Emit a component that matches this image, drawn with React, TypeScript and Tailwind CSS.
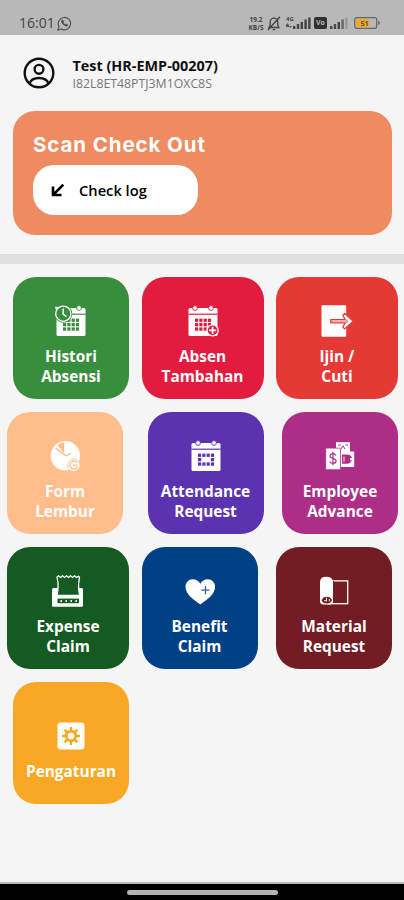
import type { ReactNode } from "react";

// Icons are drawn in white, the cut-outs take the tile colour via currentColor
function Icon({ children }: { children: ReactNode }) {
  return (
    <svg width="32" height="32" viewBox="0 0 32 32" fill="#fff">
      {children}
    </svg>
  );
}

function Calendar({ skip = [] }: { skip?: number[] }) {
  return (
    <>
      <rect x="1.5" y="3" width="29" height="28" rx="1.5" />
      <path d="M1.5 9.2h29" stroke="currentColor" strokeWidth="1.2" />
      <circle cx="8" cy="3" r="2.4" stroke="currentColor" strokeWidth="0.9" />
      <circle cx="24" cy="3" r="2.4" stroke="currentColor" strokeWidth="0.9" />
      {[0, 1, 2, 3, 4, 5, 6, 7, 8, 9, 10, 11].map((i) =>
        skip.includes(i) ? null : (
          <rect
            key={i}
            x={8 + (i % 4) * 4.3}
            y={13.6 + Math.floor(i / 4) * 4.4}
            width="3.2"
            height="3.3"
            fill="currentColor"
          />
        ),
      )}
    </>
  );
}

function HistoryIcon() {
  return (
    <Icon>
      <Calendar skip={[0]} />
      <circle cx="8.3" cy="8.7" r="9" fill="currentColor" />
      <circle cx="8.3" cy="8.7" r="7.6" fill="none" stroke="#fff" strokeWidth="1.3" />
      <path d="M8.2 3.4v5.8l3.2 2.4" fill="none" stroke="#fff" strokeWidth="1.5" />
      <path d="M0 1.8l4.6.2-3.4 3.8z" />
    </Icon>
  );
}

function AddCalendarIcon() {
  return (
    <Icon>
      <Calendar skip={[11]} />
      <circle cx="25.6" cy="25.4" r="6.2" />
      <circle cx="25.6" cy="25.4" r="4.9" fill="currentColor" />
      <path d="M25.6 21.8v7.2M22 25.4h7.2" stroke="#fff" strokeWidth="1.7" />
    </Icon>
  );
}

function LeaveIcon() {
  return (
    <Icon>
      <rect x="0.5" y="0.2" width="24.7" height="31.6" rx="1" />
      <path
        d="M9.8 14.6h14.4l-2.4-4.2 1.8-2 8.6 7.8-8.6 7.8-1.8-2 2.4-4.2H9.8z"
        stroke="currentColor"
        strokeWidth="1.2"
      />
      <path d="M10 16.2h16" stroke="currentColor" strokeWidth="0.6" />
      <path d="M26 14.6v3.2" stroke="currentColor" strokeWidth="1" />
    </Icon>
  );
}

function OvertimeIcon() {
  return (
    <Icon>
      <circle cx="16.3" cy="15.8" r="14.7" />
      <path d="M8.5 5.2L13 2.4l2.2.2v11z" fill="currentColor" />
      <path d="M6.5 8.2l10.5 7.6 4.8-2.4" fill="none" stroke="currentColor" strokeWidth="1.3" />
      <circle cx="24.8" cy="25.2" r="6.2" stroke="currentColor" strokeWidth="0.8" />
      <path
        d="M28.3 23a4 4 0 1 0 .3 3.4M23.5 25.2h5.3"
        fill="none"
        stroke="currentColor"
        strokeWidth="1.3"
      />
    </Icon>
  );
}

function AttendanceIcon() {
  return (
    <Icon>
      <Calendar skip={[5, 6]} />
      <rect x="13.3" y="18" width="5" height="3.8" />
    </Icon>
  );
}

function AdvanceIcon() {
  return (
    <Icon>
      <rect x="12" y="2.2" width="14" height="12" />
      <path d="M14 5h2.5M21.5 5H24M17 9l2-3.2L21 9" fill="none" stroke="currentColor" />
      <rect x="16" y="11.5" width="14.2" height="15.6" rx="1" />
      <path d="M18 14.5h5.5a4.6 4.6 0 0 1 0 9.2H18z" fill="currentColor" />
      <path d="M26 18h4v2.4h-4z" />
      <path d="M20 16.5v5.4" stroke="#fff" strokeWidth="0.9" />
      <rect x="1.7" y="8.1" width="14.8" height="21.6" rx="0.8" stroke="currentColor" strokeWidth="0.8" />
      <path
        d="M12 15.5c-.6-1.3-1.8-1.8-3-1.8-1.7 0-2.9.9-2.9 2.3 0 3.3 6 1.8 6 5 0 1.5-1.3 2.4-3.1 2.4-1.6 0-2.7-.7-3.2-2M9 11.8v13.4"
        fill="none"
        stroke="currentColor"
        strokeWidth="1.2"
      />
    </Icon>
  );
}

function ExpenseIcon() {
  return (
    <Icon>
      <path d="M0 14.5Q0 13 1.5 13h28q1.5 0 1.5 1.5v16q0 1.2-1.2 1.2H1.2Q0 31.7 0 30.5z" />
      <path
        d="M5 2l1.5-1.2 2 1.6 2-1.6 2 1.6 2-1.6 2 1.6 2-1.6 2 1.6 2-1.6 2 1.6 2-1.2 1 1-.9 6.8V14l1 6.5H5L6 14V8z"
        fill="currentColor"
        stroke="#fff"
        strokeWidth="1.3"
      />
      <rect x="5.5" y="23.6" width="21.5" height="4.6" fill="currentColor" />
      <path d="M8.5 26H25" stroke="#fff" strokeWidth="1.8" strokeDasharray="1.5 3.5" />
    </Icon>
  );
}

function BenefitIcon() {
  return (
    <Icon>
      <path d="M16.3 29.5C9 24.5 1.5 19 1.5 11.8c0-4.3 3.2-7.5 7.3-7.5 3.2 0 5.9 1.6 7.5 4.4 1.6-2.8 4.3-4.4 7.5-4.4 4.1 0 7.3 3.2 7.3 7.5 0 7.2-7.5 12.7-14.8 17.7z" />
      <path d="M21.5 11v8.2M17.4 15.1h8.2" stroke="currentColor" strokeWidth="1.3" opacity="0.8" />
    </Icon>
  );
}

function MaterialIcon() {
  return (
    <Icon>
      <rect x="9" y="5.9" width="20.7" height="22.8" fill="none" stroke="#fff" strokeWidth="1.3" />
      <path d="M2 7q0-5.300 6.2-5.300T15 6.500V27q0 2.400-2.500 2.400H5Q2 29.400 2 26z" />
      <path
        d="M3.500 25.200Q5.500 21.500 9 21.800q4 .4 5 3.400-1.600 3.300-5.200 3.200-3.800 0-5.300-3.200z"
        fill="currentColor"
      />
      <path d="M8.5 22.5v3.8M6 25.7h2.5M11.3 24v2.4" stroke="#fff" strokeWidth="0.9" />
      <path d="M15.5 6v22" stroke="currentColor" />
    </Icon>
  );
}

function SettingsIcon() {
  return (
    <Icon>
      <rect x="2.5" y="2.5" width="27" height="27" rx="3" />
      <path
        d="M16 7v18M7 16h18M9.6 9.6l12.8 12.8M22.4 9.6L9.6 22.4"
        stroke="currentColor"
        strokeWidth="2.3"
      />
      <circle cx="16" cy="16" r="6.2" fill="currentColor" />
      <circle cx="16" cy="16" r="3.3" />
    </Icon>
  );
}

const menus = [
  { label: ["Histori", "Absensi"], icon: <HistoryIcon />, style: "w-[116px] justify-self-end bg-[#388e3c] text-[#388e3c]" },
  { label: ["Absen", "Tambahan"], icon: <AddCalendarIcon />, style: "w-full bg-[#e31b3e] text-[#e31b3e]" },
  { label: ["Ijin /", "Cuti"], icon: <LeaveIcon />, style: "w-full bg-[#e53935] text-[#e53935]" },
  { label: ["Form", "Lembur"], icon: <OvertimeIcon />, style: "w-[116px] bg-[#ffbd8c] text-[#ffbd8c]" },
  { label: ["Attendance", "Request"], icon: <AttendanceIcon />, style: "w-[116px] justify-self-end bg-[#5b33b1] text-[#5b33b1]" },
  { label: ["Employee", "Advance"], icon: <AdvanceIcon />, style: "w-[116px] justify-self-end bg-[#ae2d86] text-[#ae2d86]" },
  { label: ["Expense", "Claim"], icon: <ExpenseIcon />, style: "w-full bg-[#155a20] text-[#155a20]" },
  { label: ["Benefit", "Claim"], icon: <BenefitIcon />, style: "w-[116px] bg-[#004085] text-[#004085]" },
  { label: ["Material", "Request"], icon: <MaterialIcon />, style: "w-[116px] bg-[#721c24] text-[#721c24]" },
  { label: ["Pengaturan"], icon: <SettingsIcon />, style: "w-[116px] justify-self-end bg-[#f9a825] text-[#f9a825]" },
];

function Signal({ faded = false }: { faded?: boolean }) {
  return (
    <svg width="18" height="12" viewBox="0 0 18 12" fill="#444">
      <rect x="0" y="9" width="2.4" height="3" />
      <rect x="3.8" y="7" width="2.4" height="5" />
      <rect x="7.6" y="5" width="2.4" height="7" />
      <rect x="11.4" y="2.5" width="2.4" height="9.5" opacity={faded ? 0.7 : 1} />
      <rect x="15.2" y="0.5" width="2.4" height="11.5" opacity={faded ? 0.25 : 1} />
    </svg>
  );
}

function StatusBar() {
  return (
    <div className="flex h-[35px] items-center bg-[#b8b8b8] pt-[11px] pl-[19px] text-[#444]">
      <span className="w-[36px] text-[14px] leading-none font-medium whitespace-nowrap">16:01</span>
      <svg
        className="ml-[2px]"
        width="15"
        height="15"
        viewBox="0 0 15 15"
        fill="none"
        stroke="#555"
        strokeWidth="1.2"
      >
        <path d="M1 14l1-3.4a6.2 6.2 0 1 1 2.4 2.4z" />
        <path d="M5.2 4.2c-.8.9-.4 2.4 1.2 4 1.7 1.7 3.2 2.1 4.2 1.2l-1.7-1.2-1 .6-1.9-1.9.6-1z" />
      </svg>
      <div className="ml-auto flex h-[14px] items-center pr-[23px]">
        <div className="flex w-4 flex-col items-center gap-px text-[6.5px] leading-[7px] font-bold">
          <p className="h-[7px]">19.2</p>
          <p className="h-[7px]">KB/S</p>
        </div>
        <svg
          className="ml-[3px]"
          width="14"
          height="15"
          viewBox="0 0 14 15"
          fill="none"
          stroke="#444"
          strokeWidth="1.3"
        >
          <path d="M2 11.5h10L10.8 9V6A3.8 3.8 0 0 0 3.2 6v3zM5.7 13.7h2.6M13 .8L1 14" />
        </svg>
        <div className="ml-[5px] flex h-[14px] w-[7px] flex-col items-start">
          <span className="text-[6px] leading-[7px] font-bold">4G</span>
          <svg width="6" height="5" viewBox="0 0 6 5" fill="#555">
            <path d="M0 2L1.5 0 3 2v2H0zM3 3h3L4.5 5z" />
          </svg>
        </div>
        <div className="flex items-center gap-[3px]">
          <Signal />
          <span className="flex h-[12px] w-[13px] items-center justify-center rounded-[2px] bg-[#303030] text-[7px] font-bold text-[#b8b8b8]">
            Vo
          </span>
          <Signal faded />
        </div>
        <svg className="ml-[6px]" width="27" height="12" viewBox="0 0 27 12">
          <rect x="0.7" y="0.7" width="22" height="10.6" rx="2" fill="#b8b8b8" stroke="#666" strokeWidth="1.2" />
          <rect x="2" y="2" width="13" height="8" rx="1" fill="#f5a623" />
          <path d="M24 3.5L26.5 6 24 8.5" fill="#777" />
          <text x="6.5" y="8.8" fontSize="7" fontWeight="700" fill="#555">
            51
          </text>
        </svg>
      </div>
    </div>
  );
}

export default function App() {
  return (
    <main className="flex h-[900px] w-[404px] flex-col overflow-hidden bg-[#f5f5f5] font-['Open_Sans',sans-serif]">
      <StatusBar />

      <header className="flex h-[76px] items-center gap-[17.5px] pl-[23px]">
        <svg width="32" height="32" viewBox="0 0 32 32" fill="none" stroke="#111" strokeWidth="2.4">
          <circle cx="16" cy="16" r="14.3" />
          <circle cx="16" cy="12.3" r="4.4" />
          <path d="M6.6 26.3c1.2-3.4 4.4-5.3 9.4-5.3s8.2 1.9 9.4 5.3" />
        </svg>
        <div className="pt-[2px] whitespace-nowrap">
          <h1 className="text-[14.4px] leading-[19px] font-bold text-[#111]">Test (HR-EMP-00207)</h1>
          <p className="text-[12.3px] leading-[18px] text-[#777]">I82L8ET48PTJ3M1OXC8S</p>
        </div>
      </header>

      <section className="mr-3 ml-[13px] h-[124px] rounded-[22px] bg-[#ee8b60] px-5 pt-5">
        <h2 className="font-['Inter',sans-serif] text-[20.5px] leading-[28px] font-bold tracking-[0.9px] whitespace-nowrap text-white">
          Scan Check Out
        </h2>
        <button className="mt-[6px] flex h-[50px] w-[165px] items-center gap-[14px] rounded-[21px] bg-white pl-[18px]">
          <svg width="14" height="14" viewBox="0 0 14 14" fill="none" stroke="#000" strokeWidth="2.6">
            <path d="M12.3 1.7L2.5 11.5M2 3.5V12h8.5" />
          </svg>
          <span className="text-[14.7px] font-semibold text-black">Check log</span>
        </button>
      </section>

      <div className="mt-[19px] h-[10px] shrink-0 bg-[#e0e0e0]" />

      <nav className="mt-[13px] grid grid-cols-[122px_122px_122px] gap-x-[12.5px] gap-y-[13px] pl-[7px]">
        {menus.map((menu) => (
          <button
            key={menu.label.join(" ")}
            className={`flex h-[122px] flex-col items-center justify-center gap-[9.5px] rounded-[23px] pt-[16.5px] ${menu.style}`}
          >
            {menu.icon}
            <span className="text-[15.4px] leading-[20.5px] font-bold whitespace-nowrap text-white">
              {menu.label.map((line) => (
                <span key={line} className="block">
                  {line}
                </span>
              ))}
            </span>
          </button>
        ))}
      </nav>

      <footer className="mt-auto flex h-[18px] shrink-0 items-start justify-center border-t-2 border-[#bbb] bg-black pt-[6px]">
        <div className="h-[5px] w-[151px] rounded-full bg-[#b3b3b3]" />
      </footer>
    </main>
  );
}
